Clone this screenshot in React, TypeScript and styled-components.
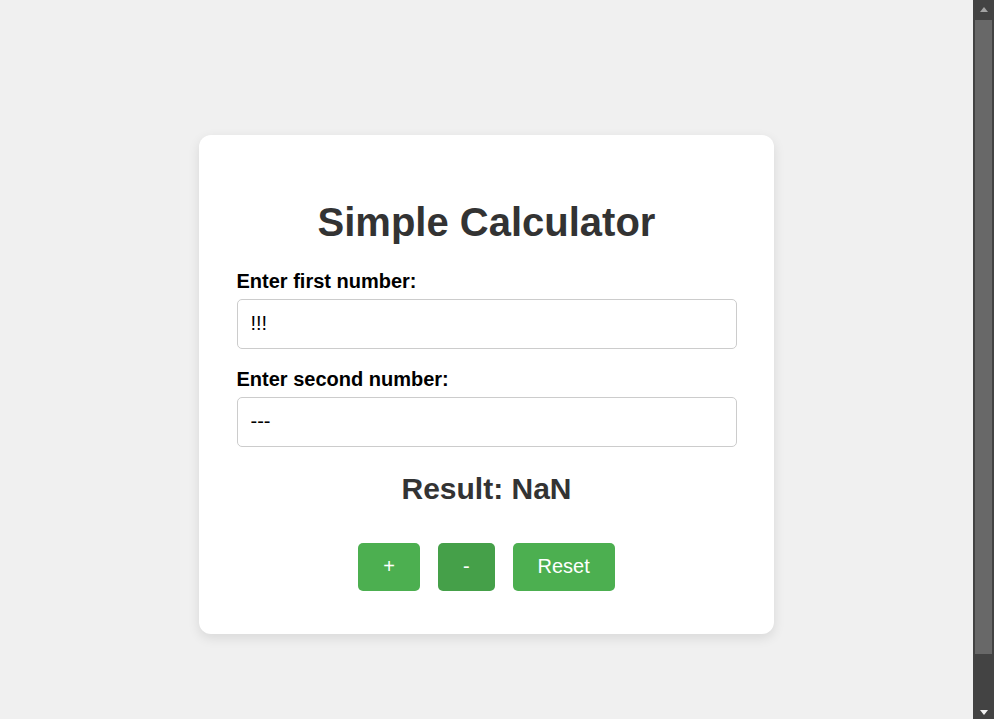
import React from "react";
import styled, { createGlobalStyle } from "styled-components";

const GlobalStyle = createGlobalStyle`
  html, body {
    margin: 0;
    padding: 0;
    background: #f0f0f0;
    font-family: "Liberation Sans", Arial, sans-serif;
    overflow: hidden;
  }
`;

const Screen = styled.div`
  display: flex;
  height: 100vh;
`;

const Page = styled.main`
  flex: 1;
  box-sizing: border-box;
  padding-top: 49px;
  display: flex;
  align-items: center;
  justify-content: center;
`;

const ScrollBar = styled.div`
  width: 21px;
  flex-shrink: 0;
  background: #434343;
  display: flex;
  flex-direction: column;
`;

const ScrollButton = styled.div`
  height: 17px;
  display: flex;
  align-items: center;
  justify-content: center;
`;

const Arrow = styled.span<{ $down?: boolean }>`
  width: 0;
  height: 0;
  border-left: 4.5px solid transparent;
  border-right: 4.5px solid transparent;
  ${(p) =>
    p.$down
      ? "border-top: 5px solid #f2f2f2; margin-top: 3px;"
      : "border-bottom: 5px solid #a3a3a3; margin-top: 1px;"}
`;

const Track = styled.div`
  flex: 1;
  padding: 3px 2px 0;
`;

const Thumb = styled.div`
  height: 634px;
  background: #686868;
`;

const Card = styled.div`
  width: 500px;
  padding: 38px 37.5px 43px;
  background: #ffffff;
  border-radius: 12px;
  box-shadow: 0 4px 12px rgba(0, 0, 0, 0.1);
  display: flex;
  flex-direction: column;
`;

const Title = styled.h1`
  margin: 26px 0 25px;
  font-size: 40px;
  line-height: 46px;
  font-weight: bold;
  color: #333333;
  text-align: center;
`;

const Label = styled.label`
  display: block;
  font-size: 20px;
  line-height: 23px;
  font-weight: bold;
  color: #000000;
  margin-bottom: 6px;
`;

const Input = styled.input`
  display: block;
  box-sizing: border-box;
  width: 100%;
  height: 50px;
  margin: 0 0 19px;
  padding: 0 13px;
  border: 1px solid #cccccc;
  border-radius: 5px;
  font-family: "Liberation Sans", Arial, sans-serif;
  font-size: 20px;
  color: #000000;
  background: #ffffff;
  outline: none;
`;

const Result = styled.div`
  margin-top: 5px;
  font-size: 30px;
  line-height: 35px;
  font-weight: bold;
  color: #333333;
  text-align: center;
`;

const ButtonRow = styled.div`
  margin-top: 37px;
  display: flex;
  justify-content: center;
  gap: 18px;
`;

const Button = styled.button<{ $active?: boolean }>`
  height: 48px;
  padding: 0 25px;
  border: none;
  border-radius: 5px;
  background: ${(p) => (p.$active ? "#45a049" : "#4caf50")};
  color: #ffffff;
  font-family: "Liberation Sans", Arial, sans-serif;
  font-size: 20px;
  cursor: pointer;
`;

export default function App() {
  return (
    <>
      <GlobalStyle />
      <Screen>
        <Page>
          <Card>
            <Title>Simple Calculator</Title>
            <Label htmlFor="num1">Enter first number:</Label>
            <Input id="num1" type="text" defaultValue="!!!" />
            <Label htmlFor="num2">Enter second number:</Label>
            <Input id="num2" type="text" defaultValue="---" />
            <Result>Result: NaN</Result>
            <ButtonRow>
              <Button>+</Button>
              <Button $active>-</Button>
              <Button>Reset</Button>
            </ButtonRow>
          </Card>
        </Page>
        <ScrollBar aria-hidden="true">
          <ScrollButton>
            <Arrow />
          </ScrollButton>
          <Track>
            <Thumb />
          </Track>
          <ScrollButton>
            <Arrow $down />
          </ScrollButton>
        </ScrollBar>
      </Screen>
    </>
  );
}
